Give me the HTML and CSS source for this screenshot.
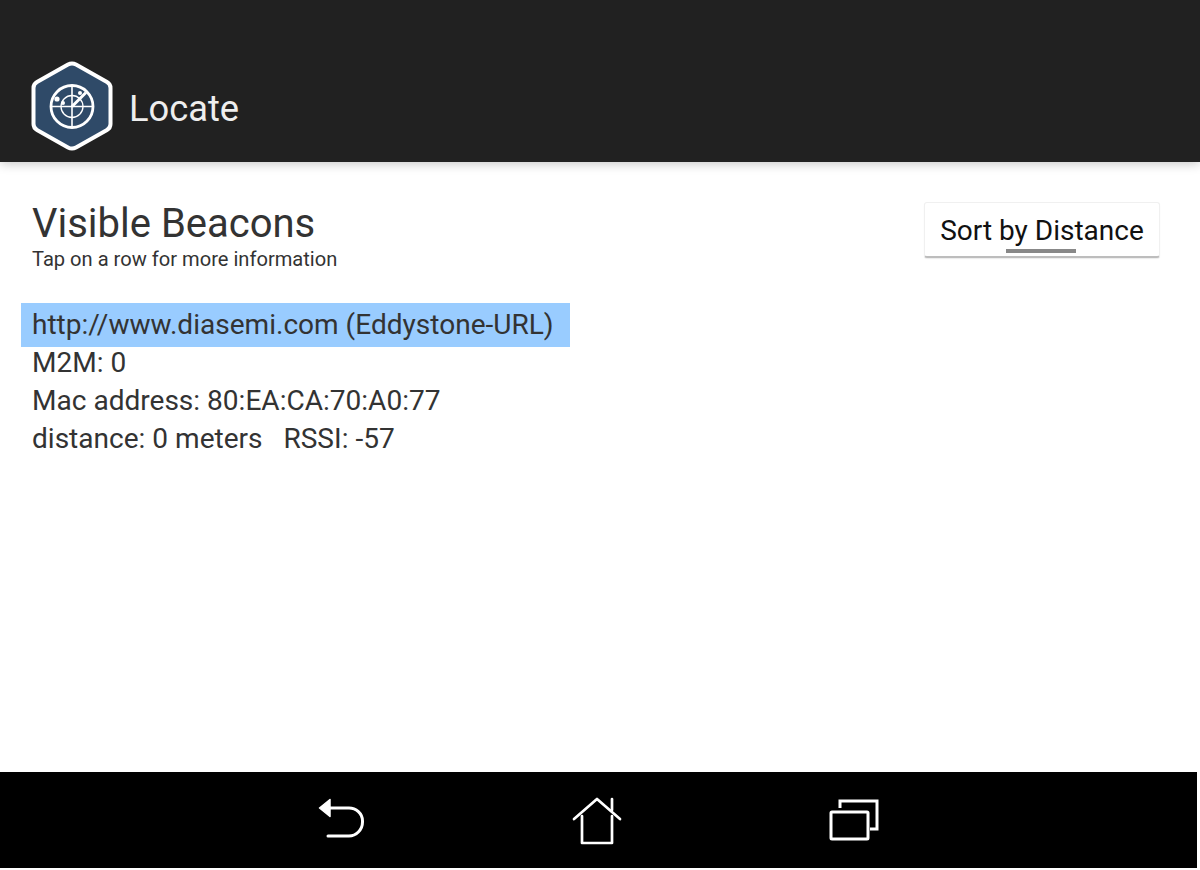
FILE: index.html
```html
<!DOCTYPE html>
<html lang="en">
<head>
<meta charset="utf-8">
<title>Locate</title>
<link rel="stylesheet" href="styles.css">
</head>
<body>
<div class="screen">
  <header class="appbar">
    <svg class="logo" width="84" height="92" viewBox="0 0 84 92">
      <path d="M38 4.500Q42 2.300 46 4.500L77 22Q80.500 24 80.500 28V64Q80.500 68 77 70L46 87.500Q42 89.700 38 87.500L7 70Q3.500 68 3.500 64V28Q3.500 24 7 22Z" fill="#2f4a68" stroke="#fff" stroke-width="4" stroke-linejoin="round"/>
      <g fill="none" stroke="#fff">
        <circle cx="42" cy="46.500" r="21" stroke-width="2.800"/>
        <circle cx="42" cy="46.500" r="11" stroke-width="1.300"/>
        <path d="M21 46.500H63M42 25.500V67.500" stroke-width="1.600"/>
        <path d="M42 46.500L56 32.500" stroke-width="3"/>
      </g>
      <g fill="#fff">
        <circle cx="27" cy="39" r="2.600"/>
        <circle cx="33" cy="43" r="2"/>
        <circle cx="50" cy="33" r="2"/>
      </g>
    </svg>
    <span class="apptitle">Locate</span>
  </header>
  <main class="content">
    <div class="heading-row">
      <div class="heading">
        <h1>Visible Beacons</h1>
        <p>Tap on a row for more information</p>
      </div>
      <button class="sort" type="button">Sort by Distance</button>
    </div>
    <section class="beacon">
      <div class="beacon-url">http://www.diasemi.com (Eddystone-URL)</div>
      <div class="beacon-line">M2M: 0</div>
      <div class="beacon-line">Mac address: 80:EA:CA:70:A0:77</div>
      <div class="beacon-line">distance: 0 meters&nbsp;&nbsp;&nbsp;RSSI: -57</div>
    </section>
  </main>
  <nav class="navbar">
    <svg class="nav-back" width="48" height="44" viewBox="0 0 48 44" fill="none" stroke="#fff" stroke-width="3" stroke-linecap="round" stroke-linejoin="round">
      <path d="M12 10H31C38 10 44.500 15.500 44.500 23V24C44.500 32 38 38 31 38H10"/>
      <path d="M12 1.500V18.500L1.500 10Z" fill="#fff" stroke-width="1.500"/>
    </svg>
    <svg class="nav-home" width="50" height="48" viewBox="0 0 50 48" fill="none" stroke="#fff" stroke-width="2.700" stroke-linecap="round" stroke-linejoin="round">
      <path d="M2 22L25 2L48 22"/>
      <path d="M10 19V46H40V19"/>
      <path d="M40 2V13"/>
    </svg>
    <svg class="nav-recent" width="50" height="42" viewBox="0 0 50 42" fill="none" stroke="#fff" stroke-width="3">
      <rect x="2" y="13" width="37" height="27" rx="1"/>
      <path d="M11 9V2H48V30H41"/>
    </svg>
  </nav>
  <div class="bottom-strip"></div>
</div>
</body>
</html>
```
FILE: styles.css
```css
* { box-sizing: border-box; }
html, body { margin: 0; padding: 0; background: #fff; }
.screen {
  width: 1200px;
  height: 870px;
  display: flex;
  flex-direction: column;
  overflow: hidden;
  font-family: Roboto, "Liberation Sans", sans-serif;
}
.appbar {
  height: 162px;
  flex: none;
  background: #212121;
  display: flex;
  align-items: flex-end;
  padding: 0 0 10px 30px;
  gap: 15px;
  box-shadow: 0 2px 10px rgba(0,0,0,.22);
  position: relative;
  z-index: 1;
}
.logo { display: block; flex: none; }
.apptitle {
  color: #eee;
  font-size: 36.3px;
  line-height: 42px;
  margin-bottom: 22px;
}
.content {
  flex: 1;
  padding: 40px 40px 0 21px;
  color: #333;
}
.heading-row {
  display: flex;
  justify-content: space-between;
  align-items: flex-start;
  height: 101px;
}
.heading { padding-left: 11px; }
h1 {
  margin: 0;
  font-size: 40px;
  font-weight: 400;
  line-height: 44px;
  color: #333;
}
p {
  margin: 1px 0 0;
  font-size: 20.13px;
  line-height: 24px;
  color: #333;
}
.sort {
  width: 236px;
  height: 56px;
  padding: 3px 0 0;
  background: #fff;
  border: 1px solid #f0f0f0;
  border-bottom: 2px solid #bdbdbd;
  border-radius: 3px;
  box-shadow: 0 1px 1px rgba(0,0,0,.08);
  font: 400 28px/34px Roboto, "Liberation Sans", sans-serif;
  color: #111;
  position: relative;
}
.sort::after {
  content: "";
  position: absolute;
  left: 81px;
  width: 70px;
  bottom: 3px;
  height: 4px;
  background: #888;
}
.beacon { font-size: 28.05px; line-height: 38px; }
.beacon-url {
  width: 549px;
  height: 44px;
  line-height: 44px;
  padding-left: 11px;
  background: #99ccff;
  white-space: nowrap;
}
.beacon-line { padding-left: 11px; }
.beacon-url + .beacon-line { margin-top: -3px; }
.navbar {
  height: 96px;
  flex: none;
  margin-right: 3px;
  background: #000;
  position: relative;
}
.navbar svg { position: absolute; display: block; }
.nav-back { left: 318px; top: 26px; }
.nav-home { left: 572px; top: 25px; }
.nav-recent { left: 829px; top: 27px; }
.bottom-strip { height: 2px; flex: none; background: #fff; }
```
